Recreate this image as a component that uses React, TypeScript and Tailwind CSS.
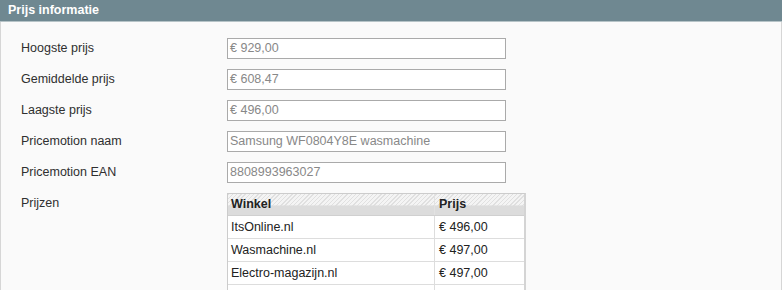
import React from 'react';

const fields = [
  { label: 'Hoogste prijs', value: '€ 929,00' },
  { label: 'Gemiddelde prijs', value: '€ 608,47' },
  { label: 'Laagste prijs', value: '€ 496,00' },
  { label: 'Pricemotion naam', value: 'Samsung WF0804Y8E wasmachine' },
  { label: 'Pricemotion EAN', value: '8808993963027' },
];

const prices = [
  { shop: 'ItsOnline.nl', price: '€ 496,00' },
  { shop: 'Wasmachine.nl', price: '€ 497,00' },
  { shop: 'Electro-magazijn.nl', price: '€ 497,00' },
  { shop: '', price: '' },
];

export default function App() {
  return (
    <div className="w-[782px] h-[290px] overflow-hidden bg-[#fafafa] font-['Liberation_Sans',Arial,sans-serif] text-[12px]">
      {/* Section header */}
      <div className="h-[22px] bg-[#6f8891] border-b border-[#b6c3c7] px-[8px] flex items-center">
        <span className="text-white font-bold text-[12.5px]">Prijs informatie</span>
      </div>

      <div className="border-l border-r border-[#d6d6d6] h-full pt-[16px] pl-[20px]">
        {fields.map((f) => (
          <div key={f.label} className="flex items-center h-[21px] mb-[10px]">
            <label className="w-[206px] text-[#2f2f2f] text-[12.5px]">{f.label}</label>
            <div className="w-[279px] h-[21px] bg-white border border-[#aaaaaa] px-[2px] flex items-center text-[#888888] text-[12.5px]">
              {f.value}
            </div>
          </div>
        ))}

        <div className="flex items-start">
          <label className="w-[206px] text-[#2f2f2f] text-[12.5px] pt-[1px]">Prijzen</label>
          <div className="w-[299px] border border-[#cccccc] border-r-2 border-r-[#d4d4d4] bg-white text-[12.5px]">
            <div className="flex h-[22px] font-bold text-[#222] bg-[repeating-linear-gradient(135deg,#e0e0e0_0px,#e0e0e0_1px,#f4f4f4_1px,#f4f4f4_3px)] border-b border-[#d0d0d0]">
              <div className="w-[207px] px-[3px] flex items-center border-r border-[#e2e2e2] bg-[linear-gradient(to_bottom,transparent_0%,transparent_50%,#dcdcdc_58%,#dcdcdc_100%)]">Winkel</div>
              <div className="flex-1 px-[4px] flex items-center bg-[linear-gradient(to_bottom,transparent_0%,transparent_50%,#dcdcdc_58%,#dcdcdc_100%)]">Prijs</div>
            </div>
            {prices.map((p, i) => (
              <div key={i} className="flex h-[23px] border-b border-[#dddddd] text-[#222]">
                <div className="w-[207px] px-[3px] flex items-center border-r border-[#dddddd]">{p.shop}</div>
                <div className="flex-1 px-[4px] flex items-center">{p.price}</div>
              </div>
            ))}
          </div>
        </div>
      </div>
    </div>
  );
}
